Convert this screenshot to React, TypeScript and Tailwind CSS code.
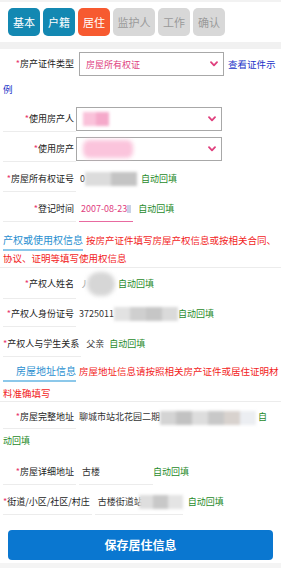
const tabs = [
  { t: "基本", c: "bg-[#1388b2] text-white", w: "w-[32px]" },
  { t: "户籍", c: "bg-[#1388b2] text-white", w: "w-[32px]" },
  { t: "居住", c: "bg-[#f75a30] text-white", w: "w-[32px]" },
  { t: "监护人", c: "bg-[#d8d8d8] text-[#9a9a9a]", w: "w-[42px]" },
  { t: "工作", c: "bg-[#d8d8d8] text-[#9a9a9a]", w: "w-[32px]" },
  { t: "确认", c: "bg-[#d8d8d8] text-[#9a9a9a]", w: "w-[32px]" },
];

function Star() {
  return <span className="text-[#e8336b]">*</span>;
}

function Label({ text, h = "h-[26px]" }: { text: string; h?: string }) {
  return (
    <div className={`${h} min-w-[73px] shrink-0 flex items-center justify-end pr-[2px] border-b border-[#ececec] text-[9px] text-[#222]`}>
      <Star />
      {text}
    </div>
  );
}

function Auto({ cls = "" }: { cls?: string }) {
  return <span className={`text-[9px] text-[#1f8a2a] ${cls}`}>自动回填</span>;
}

function Chevron() {
  return (
    <svg width="8" height="6" viewBox="0 0 8 6" className="shrink-0">
      <path d="M1 1.2 L4 4.4 L7 1.2" fill="none" stroke="#e0407e" strokeWidth="1.8" strokeLinecap="round" strokeLinejoin="round" />
    </svg>
  );
}

function Select({ children, w }: { children?: React.ReactNode; w: string }) {
  return (
    <div className={`${w} h-[24px] border border-[#a8a8a8] bg-white flex items-center justify-between pl-[6px] pr-[5px]`}>
      <div className="flex items-center">{children}</div>
      <Chevron />
    </div>
  );
}

export default function App() {
  return (
    <div className="w-[281px] min-h-[568px] bg-white font-['Noto_Sans_CJK_SC',sans-serif] text-[#333] flex flex-col">
      <div className="h-[2px] bg-[#f2f2f2]" />
      <div className="flex gap-[3px] px-[8px] py-[6px]">
        {tabs.map((x) => (
          <div key={x.t} className={`${x.c} ${x.w} h-[28px] rounded-[5px] flex items-center justify-center text-[11px]`}>
            {x.t}
          </div>
        ))}
      </div>
      <div className="h-[7px] bg-[#f1f1f1]" />

      {/* 房产证件类型 */}
      <div className="h-[51px] px-[3px] pt-[3px] leading-[24px] text-[9px]">
        <span className="inline-block w-[73px] text-right pr-[2px] align-top text-[#222]">
          <Star />房产证件类型
        </span>
        <span className="inline-block align-top ml-[3px]">
          <Select w="w-[145px]">
            <span className="text-[9px] text-[#e0407e] leading-none">房屋所有权证</span>
          </Select>
        </span>
        <a className="ml-[4px] text-[9.5px] text-[#2233c8]">查看证件示例</a>
      </div>

      <div className="h-[32px] flex items-end px-[3px]">
        <Label text="使用房产人" />
        <div className="h-[26px] flex items-center">
          <Select w="w-[146px]">
            <span className="flex w-[26px] h-[14px] blur-[1.5px]">
              <span className="flex-1 bg-[#fac2da]" />
              <span className="flex-1 bg-[#f5a9ca]" />
            </span>
          </Select>
        </div>
      </div>

      <div className="h-[30px] flex items-end px-[3px]">
        <Label text="使用房产" />
        <div className="h-[26px] flex items-center">
          <Select w="w-[146px]">
            <span className="w-[50px] h-[18px] bg-[#fbc4dc] blur-[2px] rounded-[6px]" />
          </Select>
        </div>
      </div>

      <div className="h-[30px] flex items-end px-[3px]">
        <Label text="房屋所有权证号" />
        <div className="h-[26px] flex items-center pl-[4px] text-[9px]">
          <span>0</span>
          <span className="flex w-[52px] h-[14px] blur-[1.5px]">
            <span className="flex-1 bg-[#dcdcdc]" />
            <span className="flex-1 bg-[#c4c4c4]" />
          </span>
          <Auto cls="ml-[4px]" />
        </div>
      </div>

      <div className="h-[30px] flex items-end px-[3px]">
        <Label text="登记时间" />
        <div className="h-[26px] flex items-center pl-[3px] text-[9px]">
          <span className="h-[26px] flex items-center px-[2px] border-b border-[#e86aa0] text-[#e0407e]">
            2007-08-23<span className="w-[4px] h-[8px] bg-[#c8d2e6]" />
          </span>
          <Auto cls="ml-[5px]" />
        </div>
      </div>

      {/* 产权或使用权信息 */}
      <div className="h-[46px] pl-[3px] pt-[9px] text-[10px] leading-[18px] border-b border-[#ececec]">
        <span className="text-[10px] text-[#2a8fd0] border-b-2 border-[#8cc8ea] pb-[2px]">产权或使用权信息</span>
        <span className="ml-[3px] text-[9.5px] text-[#f21c1c]">按房产证件填写房屋产权信息或按相关合同、协议、证明等填写使用权信息</span>
      </div>

      <div className="h-[31px] flex items-end px-[3px]">
        <Label text="产权人姓名" h="h-[30px]" />
        <div className="h-[30px] flex items-center pl-[4px] text-[9px]">
          <span className="text-[#999]">丿</span>
          <span className="w-[28px] h-[24px] bg-[#d6d6d6] blur-[2px] rounded-full -ml-[2px]" />
          <Auto cls="ml-[3px]" />
        </div>
      </div>

      <div className="h-[28px] flex items-end px-[3px]">
        <Label text="产权人身份证号" />
        <div className="h-[26px] flex items-center pl-[3px] text-[9px]">
          <span>3725011</span>
          <span className="flex w-[64px] h-[14px] blur-[1.5px]">
            <span className="flex-1 bg-[#e2e2e2]" />
            <span className="flex-1 bg-[#cfcfcf]" />
            <span className="flex-1 bg-[#c6c6c6]" />
            <span className="flex-1 bg-[#dadada]" />
          </span>
          <Auto />
        </div>
      </div>

      <div className="h-[30px] flex items-end px-[3px]">
        <Label text="产权人与学生关系" />
        <div className="h-[26px] flex items-center pl-[5px] text-[9px]">
          <span>父亲</span>
          <Auto cls="ml-[5px]" />
        </div>
      </div>

      {/* 房屋地址信息 */}
      <div className="h-[45px] pl-[3px] pt-[3px] text-[10px] leading-[21px] border-b border-[#ececec]">
        <span className="pl-[13px] text-[10px] text-[#2a8fd0] border-b-2 border-[#8cc8ea] pb-[2px]">房屋地址信息</span>
        <span className="ml-[3px] text-[9.5px] text-[#f21c1c]">房屋地址信息请按照相关房产证件或居住证明材料准确填写</span>
      </div>

      <div className="h-[51px] pl-[3px] pr-[10px] pt-[3px] leading-[24px] text-[9px]">
        <span className="inline-block align-top h-[24px] w-[73px] text-right pr-[2px] border-b border-[#ececec] text-[#222]">
          <Star />房屋完整地址
        </span>
        <span className="ml-[3px]">聊城市站北花园二期</span>
        <span className="inline-flex align-middle w-[96px] h-[14px] blur-[1.5px]">
          <span className="flex-1 bg-[#d4d4d4]" />
          <span className="flex-1 bg-[#c2c2c2]" />
          <span className="flex-1 bg-[#dddddd]" />
          <span className="flex-1 bg-[#c8c8c8]" />
          <span className="flex-1 bg-[#d8d2ce]" />
          <span className="flex-1 bg-[#eceef2]" />
        </span>
        <Auto cls="ml-[2px]" />
      </div>

      <div className="h-[32px] flex items-end px-[3px]">
        <Label text="房屋详细地址" />
        <div className="h-[26px] w-[74px] flex items-center pl-[3px] text-[9px] border-b border-[#ececec] ml-[3px]">
          古楼
        </div>
        <div className="h-[26px] flex items-center">
          <Auto />
        </div>
      </div>

      <div className="h-[30px] flex items-end px-[3px]">
        <Label text="街道/小区/社区/村庄" />
        <div className="h-[26px] flex items-center pl-[3px] text-[9px] border-b border-[#ececec] ml-[3px]">
          古楼街道站
          <span className="flex w-[44px] h-[14px] blur-[1.5px] -ml-[4px]">
            <span className="flex-1 bg-[#dedede]" />
            <span className="flex-1 bg-[#c8c8c8]" />
            <span className="flex-1 bg-[#e4e4e4]" />
          </span>
        </div>
        <div className="h-[26px] flex items-center ml-[5px]">
          <Auto />
        </div>
      </div>

      <div className="px-[8px] mt-[15px]">
        <button className="w-full h-[30px] rounded-[4px] bg-[#0a77d0] text-white text-[12px] font-bold">
          保存居住信息
        </button>
      </div>
      <div className="mt-[3px] flex-1 bg-[#f4f4f4]" />
    </div>
  );
}
